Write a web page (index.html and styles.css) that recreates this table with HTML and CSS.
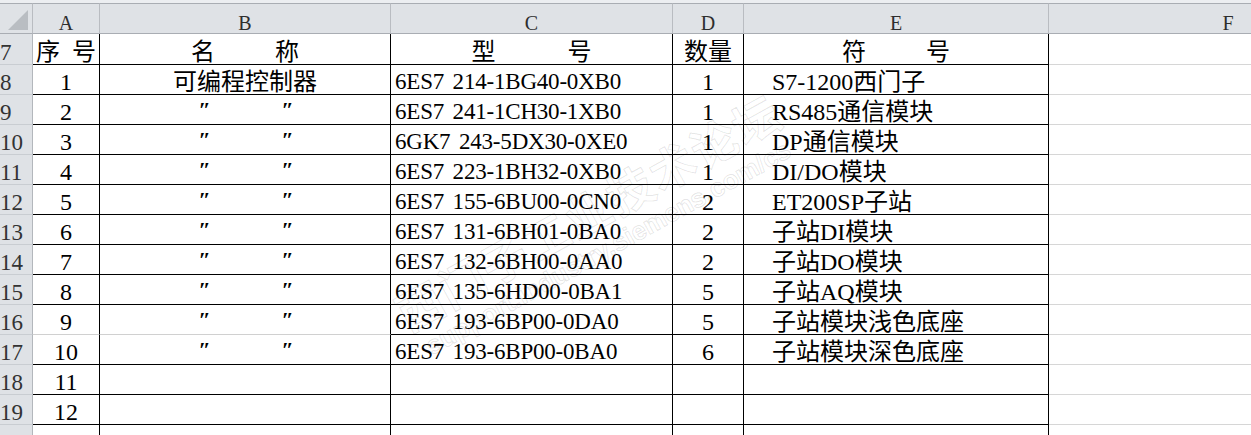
FILE: index.html
```html
<!DOCTYPE html>
<html lang="zh-CN">
<head>
<meta charset="utf-8">
<title>Sheet</title>
<link rel="stylesheet" href="styles.css">
</head>
<body>
<div class="top-strip"></div>
<div class="sheet">
  <div class="colhdr corner"><span class="tri"></span></div>
  <div class="colhdr">A</div>
  <div class="colhdr">B</div>
  <div class="colhdr">C</div>
  <div class="colhdr">D</div>
  <div class="colhdr">E</div>
  <div class="colhdr fhdr">F</div>

  <div class="rowhdr r7">7</div>
  <div class="cell r7 center"><span>序</span><span class="g12"></span><span>号</span></div>
  <div class="cell r7 center"><span>名</span><span class="g60"></span><span>称</span></div>
  <div class="cell r7 center"><span>型</span><span class="g72"></span><span>号</span></div>
  <div class="cell r7 center">数量</div>
  <div class="cell r7 center"><span>符</span><span class="g60"></span><span>号</span></div>
  <div class="fcell r7"></div>

  <div class="rowhdr">8</div>
  <div class="cell center">1</div>
  <div class="cell center">可编程控制器</div>
  <div class="cell code">6ES7 214-1BG40-0XB0</div>
  <div class="cell center">1</div>
  <div class="cell sym">S7-1200西门子</div>
  <div class="fcell"></div>

  <div class="rowhdr">9</div>
  <div class="cell center">2</div>
  <div class="cell ditto"><span class="mark">″</span><span class="mark">″</span></div>
  <div class="cell code">6ES7 241-1CH30-1XB0</div>
  <div class="cell center">1</div>
  <div class="cell sym">RS485通信模块</div>
  <div class="fcell"></div>

  <div class="rowhdr">10</div>
  <div class="cell center">3</div>
  <div class="cell ditto"><span class="mark">″</span><span class="mark">″</span></div>
  <div class="cell code">6GK7 243-5DX30-0XE0</div>
  <div class="cell center">1</div>
  <div class="cell sym">DP通信模块</div>
  <div class="fcell"></div>

  <div class="rowhdr">11</div>
  <div class="cell center">4</div>
  <div class="cell ditto"><span class="mark">″</span><span class="mark">″</span></div>
  <div class="cell code">6ES7 223-1BH32-0XB0</div>
  <div class="cell center">1</div>
  <div class="cell sym">DI/DO模块</div>
  <div class="fcell"></div>

  <div class="rowhdr">12</div>
  <div class="cell center">5</div>
  <div class="cell ditto"><span class="mark">″</span><span class="mark">″</span></div>
  <div class="cell code">6ES7 155-6BU00-0CN0</div>
  <div class="cell center">2</div>
  <div class="cell sym">ET200SP子站</div>
  <div class="fcell"></div>

  <div class="rowhdr">13</div>
  <div class="cell center">6</div>
  <div class="cell ditto"><span class="mark">″</span><span class="mark">″</span></div>
  <div class="cell code">6ES7 131-6BH01-0BA0</div>
  <div class="cell center">2</div>
  <div class="cell sym">子站DI模块</div>
  <div class="fcell"></div>

  <div class="rowhdr">14</div>
  <div class="cell center">7</div>
  <div class="cell ditto"><span class="mark">″</span><span class="mark">″</span></div>
  <div class="cell code">6ES7 132-6BH00-0AA0</div>
  <div class="cell center">2</div>
  <div class="cell sym">子站DO模块</div>
  <div class="fcell"></div>

  <div class="rowhdr">15</div>
  <div class="cell center">8</div>
  <div class="cell ditto"><span class="mark">″</span><span class="mark">″</span></div>
  <div class="cell code">6ES7 135-6HD00-0BA1</div>
  <div class="cell center">5</div>
  <div class="cell sym">子站AQ模块</div>
  <div class="fcell"></div>

  <div class="rowhdr">16</div>
  <div class="cell center soft">9</div>
  <div class="cell ditto soft"><span class="mark">″</span><span class="mark">″</span></div>
  <div class="cell code">6ES7 193-6BP00-0DA0</div>
  <div class="cell center">5</div>
  <div class="cell sym">子站模块浅色底座</div>
  <div class="fcell"></div>

  <div class="rowhdr">17</div>
  <div class="cell center">10</div>
  <div class="cell ditto"><span class="mark">″</span><span class="mark">″</span></div>
  <div class="cell code">6ES7 193-6BP00-0BA0</div>
  <div class="cell center">6</div>
  <div class="cell sym">子站模块深色底座</div>
  <div class="fcell"></div>

  <div class="rowhdr">18</div>
  <div class="cell center">11</div>
  <div class="cell"></div>
  <div class="cell"></div>
  <div class="cell"></div>
  <div class="cell"></div>
  <div class="fcell"></div>

  <div class="rowhdr">19</div>
  <div class="cell center">12</div>
  <div class="cell"></div>
  <div class="cell"></div>
  <div class="cell"></div>
  <div class="cell"></div>
  <div class="fcell"></div>

  <div class="rowhdr">20</div>
  <div class="cell center">13</div>
  <div class="cell"></div>
  <div class="cell"></div>
  <div class="cell"></div>
  <div class="cell"></div>
  <div class="fcell"></div>
</div>
<div class="watermark">
  <div class="wm-big">西门子工业技术论坛</div>
  <div class="wm-small">support.industry.siemens.com/cs</div>
</div>
</body>
</html>
```
FILE: styles.css
```css
html, body {
  margin: 0;
  padding: 0;
  background: #ffffff;
  overflow: hidden;
}
body {
  width: 1251px;
  height: 435px;
  position: relative;
  font-family: "Liberation Serif", "Noto Sans CJK SC", serif;
  color: #000;
}
.top-strip {
  height: 3px;
  background: #eceef1;
}
.sheet {
  display: grid;
  grid-template-columns: 33px 67px 291px 282px 71px 305px 358px;
  grid-template-rows: 31px 31px repeat(13, 30px);
  width: 1407px;
}
.colhdr {
  box-sizing: border-box;
  background: #dfe2e6;
  border-top: 1px solid #a9adb3;
  border-bottom: 1px solid #a9adb3;
  border-right: 1px solid #b9bcc1;
  display: flex;
  align-items: flex-end;
  justify-content: center;
  font-size: 20px;
  line-height: 20px;
  color: #2e2e2e;
}
.fhdr {
  border-right: none;
}
.corner {
  position: relative;
}
.tri {
  position: absolute;
  right: 4px;
  bottom: 3px;
  width: 0;
  height: 0;
  border-left: 20px solid transparent;
  border-bottom: 20px solid #b9bdc2;
}
.rowhdr {
  box-sizing: border-box;
  background: #dfe2e6;
  border-right: 1px solid #b3b7bc;
  border-bottom: 1px solid #c9cdd2;
  display: flex;
  align-items: flex-end;
  font-size: 23px;
  line-height: 23px;
  color: #333;
  padding-left: 0;
  white-space: nowrap;
  overflow: hidden;
}
.cell {
  box-sizing: border-box;
  border-right: 1px solid #000;
  border-bottom: 1px solid #000;
  display: flex;
  align-items: flex-end;
  font-size: 24px;
  line-height: 24px;
  white-space: nowrap;
}
.cell.soft {
  border-bottom-color: #d0d0d0;
}
.center {
  justify-content: center;
}
.code {
  padding-left: 4px;
  font-size: 23px;
  letter-spacing: -0.2px;
  word-spacing: 3px;
}
.sym {
  padding-left: 28px;
}
.g12 { width: 12px; }
.g60 { width: 60px; }
.g72 { width: 72px; }
.ditto {
  justify-content: center;
  gap: 73px;
}
.mark {
  width: 10px;
  text-align: center;
  font-weight: bold;
  font-style: italic;
  font-size: 22px;
  position: relative;
  top: -2px;
}
.fcell {
  box-sizing: border-box;
  border-bottom: 1px solid #d6d6d6;
}
.watermark {
  position: absolute;
  left: 360px;
  top: 182px;
  width: 470px;
  transform: rotate(-29deg);
  transform-origin: center;
  text-align: center;
  pointer-events: none;
  font-family: "Noto Sans CJK SC", sans-serif;
}
.wm-big {
  font-size: 46px;
  line-height: 54px;
  font-weight: bold;
  color: rgba(255, 255, 255, 0);
  -webkit-text-stroke: 1px rgba(0, 0, 0, 0.11);
  letter-spacing: 2px;
}
.wm-small {
  font-family: "Liberation Sans", sans-serif;
  font-size: 26px;
  line-height: 30px;
  font-weight: bold;
  color: rgba(255, 255, 255, 0);
  -webkit-text-stroke: 1px rgba(0, 0, 0, 0.11);
}
```
